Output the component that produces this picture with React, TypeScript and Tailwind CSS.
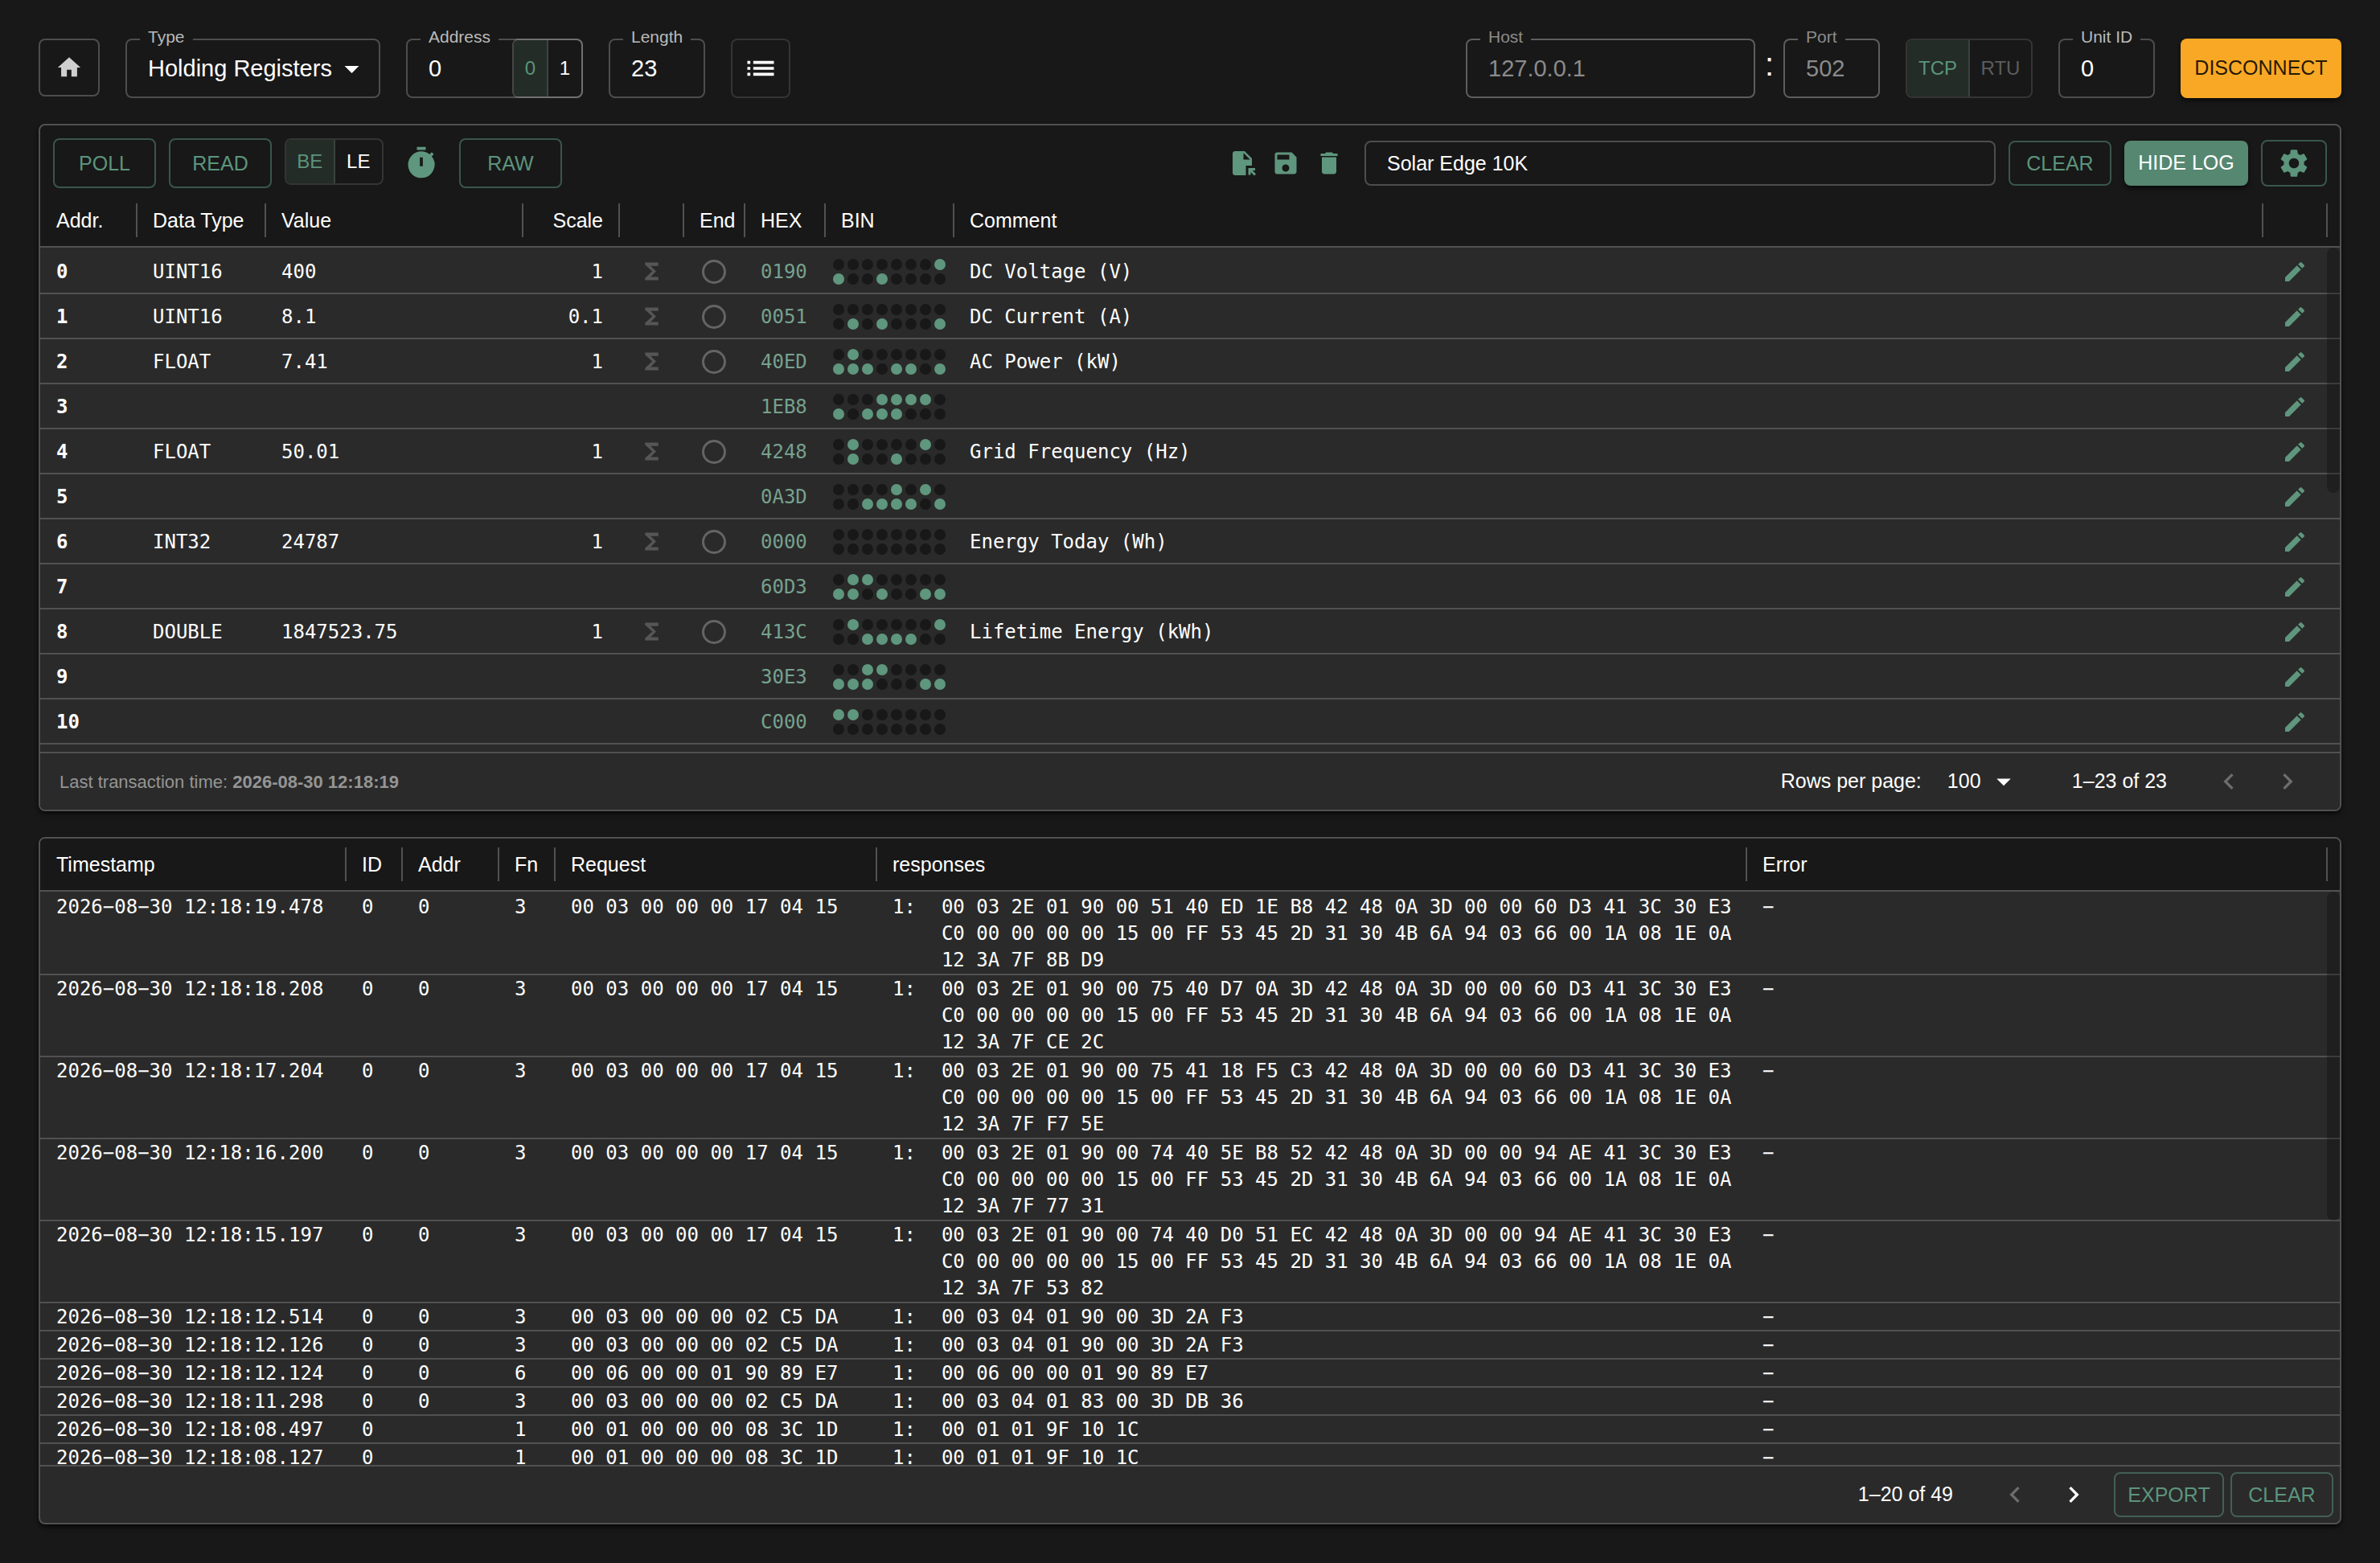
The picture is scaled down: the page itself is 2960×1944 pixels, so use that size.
import { ReactNode } from 'react'
import {
  MdArrowDropDown,
  MdDelete,
  MdEdit,
  MdFileOpen,
  MdFunctions,
  MdHome,
  MdKeyboardArrowLeft,
  MdKeyboardArrowRight,
  MdList,
  MdSave,
  MdSettings,
  MdTimer,
} from 'react-icons/md'

interface Register {
  addr: number
  hex: string
  type?: string
  value?: string
  scale?: string
  comment?: string
}

const registers: Register[] = [
  { addr: 0, type: 'UINT16', value: '400', scale: '1', hex: '0190', comment: 'DC Voltage (V)' },
  { addr: 1, type: 'UINT16', value: '8.1', scale: '0.1', hex: '0051', comment: 'DC Current (A)' },
  { addr: 2, type: 'FLOAT', value: '7.41', scale: '1', hex: '40ED', comment: 'AC Power (kW)' },
  { addr: 3, hex: '1EB8' },
  { addr: 4, type: 'FLOAT', value: '50.01', scale: '1', hex: '4248', comment: 'Grid Frequency (Hz)' },
  { addr: 5, hex: '0A3D' },
  { addr: 6, type: 'INT32', value: '24787', scale: '1', hex: '0000', comment: 'Energy Today (Wh)' },
  { addr: 7, hex: '60D3' },
  { addr: 8, type: 'DOUBLE', value: '1847523.75', scale: '1', hex: '413C', comment: 'Lifetime Energy (kWh)' },
  { addr: 9, hex: '30E3' },
  { addr: 10, hex: 'C000' },
]

interface LogEntry {
  time: string
  addr: string
  fn: string
  request: string
  response: string[]
}

const poll = '00 03 00 00 00 17 04 15'
const second = 'C0 00 00 00 00 15 00 FF 53 45 2D 31 30 4B 6A 94 03 66 00 1A 08 1E 0A'

const log: LogEntry[] = [
  { time: '12:18:19.478', addr: '0', fn: '3', request: poll, response: ['00 03 2E 01 90 00 51 40 ED 1E B8 42 48 0A 3D 00 00 60 D3 41 3C 30 E3', second, '12 3A 7F 8B D9'] },
  { time: '12:18:18.208', addr: '0', fn: '3', request: poll, response: ['00 03 2E 01 90 00 75 40 D7 0A 3D 42 48 0A 3D 00 00 60 D3 41 3C 30 E3', second, '12 3A 7F CE 2C'] },
  { time: '12:18:17.204', addr: '0', fn: '3', request: poll, response: ['00 03 2E 01 90 00 75 41 18 F5 C3 42 48 0A 3D 00 00 60 D3 41 3C 30 E3', second, '12 3A 7F F7 5E'] },
  { time: '12:18:16.200', addr: '0', fn: '3', request: poll, response: ['00 03 2E 01 90 00 74 40 5E B8 52 42 48 0A 3D 00 00 94 AE 41 3C 30 E3', second, '12 3A 7F 77 31'] },
  { time: '12:18:15.197', addr: '0', fn: '3', request: poll, response: ['00 03 2E 01 90 00 74 40 D0 51 EC 42 48 0A 3D 00 00 94 AE 41 3C 30 E3', second, '12 3A 7F 53 82'] },
  { time: '12:18:12.514', addr: '0', fn: '3', request: '00 03 00 00 00 02 C5 DA', response: ['00 03 04 01 90 00 3D 2A F3'] },
  { time: '12:18:12.126', addr: '0', fn: '3', request: '00 03 00 00 00 02 C5 DA', response: ['00 03 04 01 90 00 3D 2A F3'] },
  { time: '12:18:12.124', addr: '0', fn: '6', request: '00 06 00 00 01 90 89 E7', response: ['00 06 00 00 01 90 89 E7'] },
  { time: '12:18:11.298', addr: '0', fn: '3', request: '00 03 00 00 00 02 C5 DA', response: ['00 03 04 01 83 00 3D DB 36'] },
  { time: '12:18:08.497', addr: '', fn: '1', request: '00 01 00 00 00 08 3C 1D', response: ['00 01 01 9F 10 1C'] },
  { time: '12:18:08.127', addr: '', fn: '1', request: '00 01 00 00 00 08 3C 1D', response: ['00 01 01 9F 10 1C'] },
]

interface FieldProps {
  id: string
  label: string
  className: string
  disabled?: boolean
  children: ReactNode
}

function Field({ id, label, className, disabled, children }: FieldProps) {
  return (
    <div
      className={`relative flex h-[74px] rounded-lg border-2 ${disabled ? 'border-[#5d5d5d] text-[#8b8b8b]' : 'border-[#4d4d4d] text-white'} ${className}`}
    >
      <label
        htmlFor={id}
        className={`absolute -top-4 left-4 bg-[#181818] px-[10px] text-[21px] leading-6 whitespace-nowrap ${disabled ? 'text-[#8b8b8b]' : 'text-[#bababa]'}`}
      >
        {label}
      </label>
      {children}
    </div>
  )
}

function OutlineButton({ children, className }: { children: ReactNode; className: string }) {
  return (
    <button
      className={`flex shrink-0 items-center justify-center rounded-lg border-2 border-[#5c947c]/50 text-[25px] leading-8 text-[#5c947c] ${className}`}
    >
      {children}
    </button>
  )
}

// the divider sits centred on the edge between two columns
function Head({ children, right }: { children?: ReactNode; right?: boolean }) {
  return (
    <th scope="col" className="border-b-2 border-[#515151] p-0 font-normal">
      <div
        className={`-mr-px flex h-[42px] items-center border-r-2 border-[#515151] pt-[2px] pl-5 whitespace-nowrap ${right ? 'justify-end pr-[19px]' : ''}`}
      >
        {children}
      </div>
    </th>
  )
}

function Bits({ hex }: { hex: string }) {
  const bits = parseInt(hex, 16).toString(2).padStart(16, '0').split('')
  return (
    <div className="grid w-[140px] grid-cols-8 gap-1">
      {bits.map((bit, i) => (
        <span key={i} className={`size-[14px] rounded-full ${bit === '1' ? 'bg-[#5f967e]' : 'bg-[#181818]'}`} />
      ))}
    </div>
  )
}

function TopBar() {
  return (
    <header className="flex h-[74px] shrink-0 items-start justify-between">
      <div className="flex gap-8">
        <button aria-label="Home" className="flex h-[72px] w-[76px] items-center justify-center rounded-lg border-2 border-[#4d4d4d] text-[#cfcfcf]">
          <MdHome size={34} />
        </button>
        <Field id="type" label="Type" className="w-[317px]">
          <select id="type" className="w-full appearance-none pt-[2px] pl-[26px] text-[29px] outline-none">
            <option>Holding Registers</option>
          </select>
          <MdArrowDropDown size={43} className="pointer-events-none absolute top-[14px] right-3" />
        </Field>
        <Field id="address" label="Address" className="w-[220px]">
          <input id="address" defaultValue="0" className="min-w-0 flex-1 pt-[2px] pl-[26px] text-[29px] outline-none" />
          <div className="-m-[2px] flex w-[88px] rounded-lg border-2 border-white/20 text-2xl">
            <button className="flex-1 rounded-l-md border-r-2 border-white/12 bg-[#232c27] text-[#5c947c]">0</button>
            <button className="flex-1">1</button>
          </div>
        </Field>
        <Field id="length" label="Length" className="w-[120px]">
          <input id="length" defaultValue="23" className="w-full pt-[2px] pl-[26px] text-[29px] outline-none" />
        </Field>
        <button aria-label="List" className="flex h-[74px] w-[74px] items-center justify-center rounded-lg border-2 border-[#343434] text-white">
          <MdList size={44} />
        </button>
      </div>

      <div className="flex gap-8">
        <div className="flex">
          <Field id="host" label="Host" className="w-[360px]" disabled>
            <input id="host" defaultValue="127.0.0.1" disabled className="w-full pt-[2px] pl-[26px] text-[29px] outline-none" />
          </Field>
          <span className="w-[35px] pt-3 text-center text-[40px] leading-10">:</span>
          <Field id="port" label="Port" className="w-[120px]" disabled>
            <input id="port" defaultValue="502" disabled className="w-full pt-[2px] pl-[26px] text-[29px] outline-none" />
          </Field>
        </div>
        <div className="flex h-[74px] w-[158px] rounded-lg border-2 border-[#343434] text-2xl">
          <button className="flex-1 rounded-l-md border-r-2 border-[#3a423e] bg-[#232c27] text-[#5c947c]">TCP</button>
          <button disabled className="flex-1 text-[#5d5d5d]">RTU</button>
        </div>
        <Field id="unit" label="Unit ID" className="w-[120px]">
          <input id="unit" defaultValue="0" className="w-full pt-[2px] pl-[26px] text-[29px] outline-none" />
        </Field>
        <button className="h-[74px] w-[200px] rounded-lg bg-[#f9a825] text-[25px] text-black/87 shadow-md shadow-black/50">DISCONNECT</button>
      </div>
    </header>
  )
}

function RegisterToolbar() {
  return (
    <div className="flex shrink-0 items-center justify-between px-4 pt-4 pb-2">
      <div className="flex h-[62px] items-center gap-4">
        <OutlineButton className="h-[62px] w-32">POLL</OutlineButton>
        <OutlineButton className="h-[62px] w-32">READ</OutlineButton>
        <div className="flex h-[58px] w-[123px] self-start rounded-lg border-2 border-[#343434] text-2xl">
          <button className="flex-1 rounded-l-md border-r-2 border-[#3a423e] bg-[#232c27] text-[#5c947c]">BE</button>
          <button className="flex-1">LE</button>
        </div>
        <button aria-label="Timer" className="flex w-[62px] justify-center text-[#5f967e]">
          <MdTimer size={44} />
        </button>
        <OutlineButton className="h-[62px] w-32">RAW</OutlineButton>
      </div>
      <div className="flex items-center gap-4">
        <div className="flex gap-[18px] pr-[10px] text-[#5f967e]">
          <button aria-label="Open file"><MdFileOpen size={36} /></button>
          <button aria-label="Save"><MdSave size={36} /></button>
          <button aria-label="Delete"><MdDelete size={36} /></button>
        </div>
        <input
          aria-label="Configuration name"
          defaultValue="Solar Edge 10K"
          className="h-14 w-[785px] rounded-lg border-2 border-[#4d4d4d] pl-[26px] text-[25px] text-white outline-none"
        />
        <OutlineButton className="h-14 w-32">CLEAR</OutlineButton>
        <button className="h-14 w-[154px] rounded-lg bg-[#568770] text-[25px] text-white shadow-md shadow-black/50">HIDE LOG</button>
        <OutlineButton className="h-[58px] w-[82px]">
          <MdSettings size={42} />
        </OutlineButton>
      </div>
    </div>
  )
}

function RegisterTable() {
  return (
    <table className="w-full table-fixed border-separate border-spacing-0 text-left">
      <colgroup>
        <col className="w-[120px]" />
        <col className="w-[160px]" />
        <col className="w-[320px]" />
        <col className="w-[120px]" />
        <col className="w-[80px]" />
        <col className="w-[76px]" />
        <col className="w-[100px]" />
        <col className="w-[160px]" />
        <col />
        <col className="w-[80px]" />
        <col className="w-4" />
      </colgroup>
      <thead className="bg-[#181818] text-[25px]">
        <tr className="h-[66px]">
          <Head>Addr.</Head>
          <Head>Data Type</Head>
          <Head>Value</Head>
          <Head right>Scale</Head>
          <Head />
          <Head>End</Head>
          <Head>HEX</Head>
          <Head>BIN</Head>
          <Head>Comment</Head>
          <Head />
          <th className="border-b-2 border-[#515151]" />
        </tr>
      </thead>
      <tbody className="font-['DejaVu_Sans_Mono',monospace] text-2xl">
        {registers.map((r, i) => (
          <tr
            key={r.addr}
            className={`h-14 *:border-t-2 *:pt-px *:pb-0 ${i === 0 ? '*:border-transparent' : '*:border-[#515151]'}`}
          >
            <td className="px-5 font-bold">{r.addr}</td>
            <td className="px-5">{r.type}</td>
            <td className="px-5">{r.value}</td>
            <td className="px-5 text-right">{r.scale}</td>
            <td>{r.type && <MdFunctions size={33} className="mx-auto text-[#565656]" />}</td>
            <td>
              {r.type && (
                <input
                  type="checkbox"
                  aria-label={`End at ${r.addr}`}
                  className="mx-auto block size-[30px] appearance-none rounded-full border-3 border-[#646464]"
                />
              )}
            </td>
            <td className="px-5 text-[#76a18e]">{r.hex}</td>
            <td className="px-[10px]"><Bits hex={r.hex} /></td>
            <td className="px-5">{r.comment}</td>
            <td>
              <button aria-label={`Edit ${r.addr}`} className="mx-auto block text-[#5f967e]">
                <MdEdit size={32} />
              </button>
            </td>
            <td />
          </tr>
        ))}
        <tr className="h-14">
          <td colSpan={11} className="border-t-2 border-[#515151]" />
        </tr>
      </tbody>
    </table>
  )
}

function LogTable() {
  return (
    <table className="w-full table-fixed border-separate border-spacing-0 text-left">
      <colgroup>
        <col className="w-[380px]" />
        <col className="w-[70px]" />
        <col className="w-[120px]" />
        <col className="w-[70px]" />
        <col className="w-[400px]" />
        <col className="w-[1082px]" />
        <col />
        <col className="w-4" />
      </colgroup>
      <thead className="bg-[#181818] text-[25px]">
        <tr className="h-[66px]">
          <Head>Timestamp</Head>
          <Head>ID</Head>
          <Head>Addr</Head>
          <Head>Fn</Head>
          <Head>Request</Head>
          <Head>responses</Head>
          <Head>Error</Head>
          <th className="border-b-2 border-[#515151]" />
        </tr>
      </thead>
      <tbody className="font-['DejaVu_Sans_Mono',monospace] text-2xl">
        {log.map((entry, i) => (
          <tr
            key={entry.time}
            className={`align-top whitespace-nowrap *:border-t-2 *:pt-px *:pb-0 ${entry.response.length > 1 ? 'leading-[33px]' : 'leading-8'} ${i === 0 ? '*:border-transparent' : '*:border-[#515151]'}`}
          >
            <td className="pl-5">2026−08−30 {entry.time}</td>
            <td className="pl-5">0</td>
            <td className="pl-5">{entry.addr}</td>
            <td className="pl-5">{entry.fn}</td>
            <td className="pl-5">{entry.request}</td>
            <td className="pl-5">
              <div className="flex gap-8">
                <span>1:</span>
                <div>
                  {entry.response.map((line) => (
                    <div key={line}>{line}</div>
                  ))}
                </div>
              </div>
            </td>
            <td className="pl-5">−</td>
            <td />
          </tr>
        ))}
      </tbody>
    </table>
  )
}

function PagerButtons({ next }: { next?: boolean }) {
  return (
    <div className="ml-10 flex">
      <button aria-label="Previous page" disabled className="flex w-[73px] justify-center text-[#6d6d6d]">
        <MdKeyboardArrowLeft size={40} />
      </button>
      <button
        aria-label="Next page"
        disabled={!next}
        className={`flex w-[73px] justify-center ${next ? 'text-white' : 'text-[#6d6d6d]'}`}
      >
        <MdKeyboardArrowRight size={40} />
      </button>
    </div>
  )
}

export default function App() {
  return (
    <div className="flex h-screen flex-col gap-8 bg-[#181818] p-12 font-['Liberation_Sans',Arial,sans-serif] text-white">
      <TopBar />

      <section className="flex min-h-0 flex-1 flex-col overflow-hidden rounded-lg border-2 border-[#515151] bg-[#181818] shadow-md shadow-black/60">
        <RegisterToolbar />
        <div className="relative min-h-0 flex-1 overflow-hidden bg-[#2a2a2a]">
          <RegisterTable />
          <div className="absolute top-[66px] right-0 h-[305px] w-4 rounded-full bg-black/25" />
        </div>
        <footer className="flex h-[72px] shrink-0 items-center justify-between border-t-2 border-[#515151] bg-[#2a2a2a] pr-[29px] pl-6">
          <p className="text-[22px] text-[#959595]">
            Last transaction time: <b>2026-08-30 12:18:19</b>
          </p>
          <div className="flex items-center text-[25px]">
            <label htmlFor="page-size">Rows per page:</label>
            <div className="relative ml-8 flex items-center">
              <select id="page-size" className="w-[91px] appearance-none outline-none">
                <option>100</option>
              </select>
              <MdArrowDropDown size={42} className="pointer-events-none absolute right-0" />
            </div>
            <span className="ml-16">1–23 of 23</span>
            <PagerButtons />
          </div>
        </footer>
      </section>

      <section className="flex min-h-0 flex-1 flex-col overflow-hidden rounded-lg border-2 border-[#515151] bg-[#2a2a2a] shadow-md shadow-black/60">
        <div className="relative min-h-0 flex-1 overflow-hidden">
          <LogTable />
          <div className="absolute top-[66px] right-0 h-[409px] w-4 rounded-full bg-black/25" />
        </div>
        <footer className="flex h-[72px] shrink-0 items-center justify-end border-t-2 border-[#515151] pr-2 text-[25px]">
          <span>1–20 of 49</span>
          <PagerButtons next />
          <div className="ml-[14px] flex gap-2">
            <OutlineButton className="h-14 w-[137px]">EXPORT</OutlineButton>
            <OutlineButton className="h-14 w-32">CLEAR</OutlineButton>
          </div>
        </footer>
      </section>
    </div>
  )
}
